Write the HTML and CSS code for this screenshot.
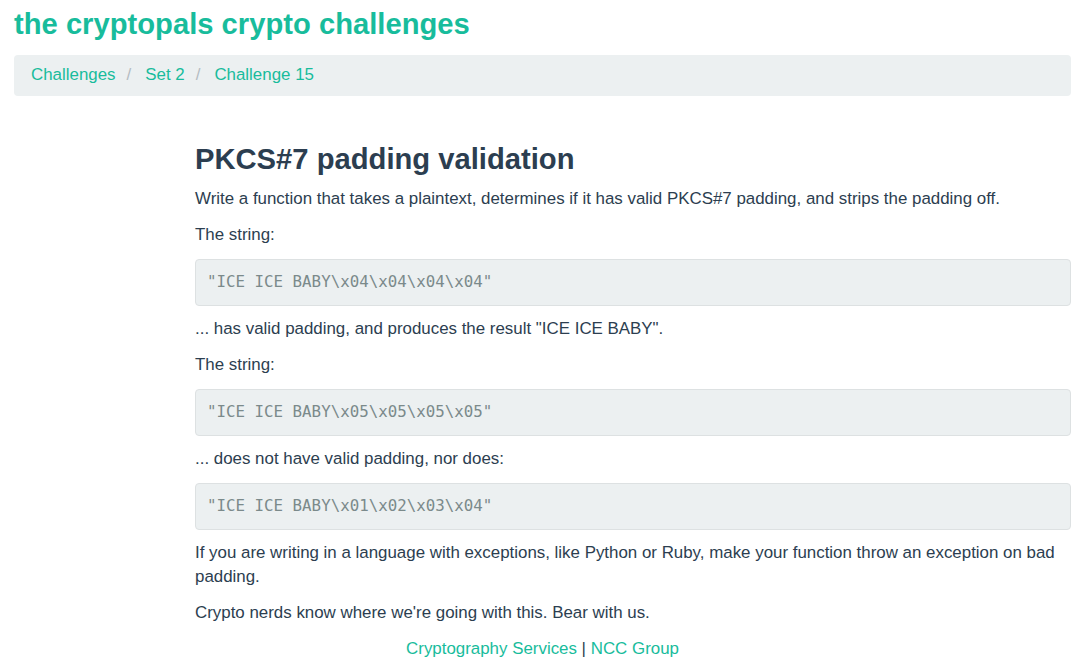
FILE: index.html
```html
<!DOCTYPE html>
<html>
<head>
<meta charset="utf-8">
<title>Challenge 15 - The Cryptopals Crypto Challenges</title>
<link rel="stylesheet" href="styles.css">
</head>
<body>
<div class="page">
  <h1 class="site-title">the cryptopals crypto challenges</h1>
  <nav class="breadcrumb">
    <a href="#">Challenges</a><span class="sep">/</span><a href="#">Set 2</a><span class="sep">/</span><a href="#">Challenge 15</a>
  </nav>
  <main class="content">
    <h2 class="title">PKCS#7 padding validation</h2>
    <p>Write a function that takes a plaintext, determines if it has valid PKCS#7 padding, and strips the padding off.</p>
    <p>The string:</p>
    <pre>"ICE ICE BABY\x04\x04\x04\x04"</pre>
    <p>... has valid padding, and produces the result "ICE ICE BABY".</p>
    <p>The string:</p>
    <pre>"ICE ICE BABY\x05\x05\x05\x05"</pre>
    <p>... does not have valid padding, nor does:</p>
    <pre>"ICE ICE BABY\x01\x02\x03\x04"</pre>
    <p>If you are writing in a language with exceptions, like Python or Ruby, make your function throw an exception on bad padding.</p>
    <p>Crypto nerds know where we're going with this. Bear with us.</p>
  </main>
  <footer class="footer">
    <a href="#">Cryptography Services</a> | <a href="#">NCC Group</a>
  </footer>
</div>
</body>
</html>
```
FILE: styles.css
```css
html, body {
  margin: 0;
  padding: 0;
  background: #ffffff;
}
body {
  font-family: "Liberation Sans", Arial, sans-serif;
  font-size: 16.9px;
  line-height: 24px;
  color: #2c3e50;
}
a {
  color: #18bc9c;
  text-decoration: none;
}
.page {
  padding: 0 9px 0 14px;
}
.site-title {
  margin: 0;
  padding-top: 6px;
  font-size: 29.2px;
  line-height: 36px;
  font-weight: bold;
  color: #18bc9c;
}
.breadcrumb {
  margin-top: 13px;
  background: #ecf0f1;
  border-radius: 4px;
  height: 41px;
  box-sizing: border-box;
  padding: 8px 17px 9px;
  font-size: 16.9px;
  line-height: 24px;
}
.breadcrumb .sep {
  color: #b4bcc2;
  padding: 0 14px 0 11px;
}
.content {
  margin-left: 181px;
  padding-top: 45px;
}
.title {
  margin: 0 0 10px;
  font-size: 29.2px;
  line-height: 36px;
  font-weight: bold;
  color: #2c3e50;
}
.content p {
  margin: 0 0 12px;
}
.content pre {
  margin: 0 0 11px;
  padding: 10px 11px 11px;
  background: #ecf0f1;
  border: 1px solid #dde1e2;
  border-radius: 4px;
  font-family: "DejaVu Sans Mono", monospace;
  font-size: 15.8px;
  line-height: 24px;
  color: #7b8a8b;
}
.footer {
  text-align: center;
  font-size: 16.9px;
  line-height: 24px;
}
.footer a {
  color: #18bc9c;
}
```
